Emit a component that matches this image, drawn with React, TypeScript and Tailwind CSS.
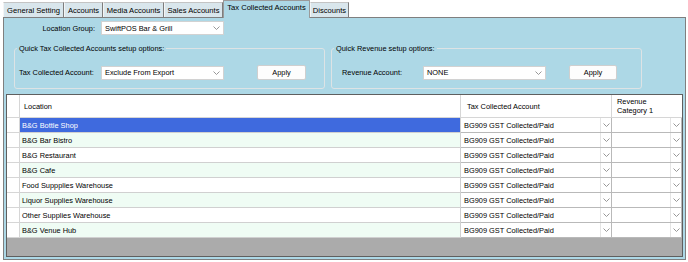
import React from "react";

const Chevron = () => (
  <svg width="7" height="4" viewBox="0 0 7 4" className="shrink-0">
    <polyline points="0.5,0.5 3.5,3.5 6.5,0.5" fill="none" stroke="#8c8c8c" strokeWidth="0.9" />
  </svg>
);

function Combo({ value, className }: { value: string; className: string }) {
  return (
    <div className={`flex h-[14px] items-center justify-between border border-[#d2d2d2] bg-white pl-[3px] pr-[3px] ${className}`}>
      <span className="whitespace-nowrap text-black">{value}</span>
      <Chevron />
    </div>
  );
}

function Button({ className }: { className: string }) {
  return (
    <div className={`flex h-[15px] items-center justify-center rounded-[2px] border border-[#cfcfcf] bg-[#fdfdfd] text-black ${className}`}>
      Apply
    </div>
  );
}

const tabs = [
  { label: "General Setting", w: "w-[61px]" },
  { label: "Accounts", w: "w-[39px]" },
  { label: "Media Accounts", w: "w-[61px]" },
  { label: "Sales Accounts", w: "w-[59px]" },
  { label: "Tax Collected Accounts", w: "w-[87px]", active: true },
  { label: "Discounts", w: "w-[39px]" },
];

const rows = [
  "B&G Bottle Shop",
  "B&G Bar Bistro",
  "B&G Restaurant",
  "B&G Cafe",
  "Food Suppplies Warehouse",
  "Liquor Supplies Warehouse",
  "Other Supplies Warehouse",
  "B&G Venue Hub",
];

function GridCombo({ value, className }: { value: string; className: string }) {
  return (
    <div className={`flex h-full items-stretch border-r border-b border-[#b9b9b9] bg-white ${className}`}>
      <div className="flex flex-1 items-center overflow-hidden whitespace-nowrap pl-[3px] text-black">{value}</div>
      <div className="flex w-[11px] items-center justify-center border-l border-[#e4e4e4]">
        <Chevron />
      </div>
    </div>
  );
}

export default function App() {
  return (
    <div className="h-[262px] w-[688px] overflow-hidden bg-white font-['Liberation_Sans',Arial,sans-serif] text-[7.4px] leading-[11px] text-black">
      {/* Tab strip */}
      <div className="flex h-[17px] items-end pl-[3px]">
        {tabs.map((t) =>
          t.active ? (
            <div
              key={t.label}
              className={`relative z-10 -mb-px flex h-[18px] items-start justify-center border border-b-0 border-[#9a9a9a] bg-[#add8e6] pt-[1px] text-[7.6px] ${t.w}`}
            >
              {t.label}
            </div>
          ) : (
            <div
              key={t.label}
              className={`flex h-[15px] items-center justify-center border border-b-0 border-l-[#f4f4f4] border-r-[#7d7d7d] border-t-[#c4c4c4] bg-[#d9e6ec] text-[7.6px] ${t.w}`}
            >
              {t.label}
            </div>
          )
        )}
      </div>

      {/* Tab panel */}
      <div className="ml-[3px] flex h-[243px] w-[683px] flex-col border border-[#7f7f7f] bg-[#add8e6] px-[2px] pb-[2px]">
        {/* Top options */}
        <div className="flex h-[76px] flex-col">
          <div className="mt-[3px] flex h-[14px] items-center">
            <div className="w-[89px] text-right">Location Group:</div>
            <Combo value="SwiftPOS Bar & Grill" className="ml-[6px] w-[123px]" />
          </div>
          <div className="mt-[8px] flex">
            <fieldset className="ml-[8px] h-[46px] w-[311px] rounded-[3px] border border-[#dde3e5]">
              <legend className="ml-[2px] px-[2px]">Quick Tax Collected Accounts setup options:</legend>
              <div className="mt-[11px] flex h-[15px] items-center pl-[4px]">
                <div className="w-[82px]">Tax Collected Account:</div>
                <Combo value="Exclude From Export" className="w-[123px]" />
                <Button className="ml-[33px] w-[49px]" />
              </div>
            </fieldset>
            <fieldset className="ml-[6px] h-[46px] w-[311px] rounded-[3px] border border-[#dde3e5]">
              <legend className="ml-[2px] px-[2px]">Quick Revenue setup options:</legend>
              <div className="mt-[11px] flex h-[15px] items-center pl-[10px]">
                <div className="w-[81px]">Revenue Account:</div>
                <Combo value="NONE" className="w-[123px]" />
                <Button className="ml-[23px] w-[48px]" />
              </div>
            </fieldset>
          </div>
        </div>

        {/* Data grid */}
        <div className="flex h-[163px] flex-col border border-[#5f5f5f] bg-[#ababab]">
          {/* Header */}
          <div className="flex h-[23px] bg-white">
            <div className="w-[13px] border-r border-b border-[#d6d6d6]" />
            <div className="flex w-[441px] items-center border-r border-b border-[#d6d6d6] pl-[4px]">Location</div>
            <div className="flex w-[151px] items-center border-r border-b border-[#d6d6d6] pl-[6px]">Tax Collected Account</div>
            <div className="flex flex-1 flex-col justify-center border-b border-[#d6d6d6] pl-[5px] leading-[9px]">
              <span>Revenue</span>
              <span>Category 1</span>
            </div>
          </div>
          {/* Rows */}
          {rows.map((r, i) => {
            const selected = i === 0;
            const bg = selected ? "bg-[#3f6ade] text-white" : i % 2 === 1 ? "bg-[#effcf4]" : "bg-white";
            return (
              <div key={r} className="flex h-[15px]">
                <div className="w-[13px] border-r border-b border-[#d6d6d6] bg-white" />
                <div className={`flex w-[441px] items-center border-r border-b border-[#d0d0d0] pl-[2px] ${bg}`}>{r}</div>
                <GridCombo value="BG909 GST Collected/Paid" className="w-[151px]" />
                <GridCombo value="" className="flex-1" />
              </div>
            );
          })}
        </div>
      </div>
    </div>
  );
}
